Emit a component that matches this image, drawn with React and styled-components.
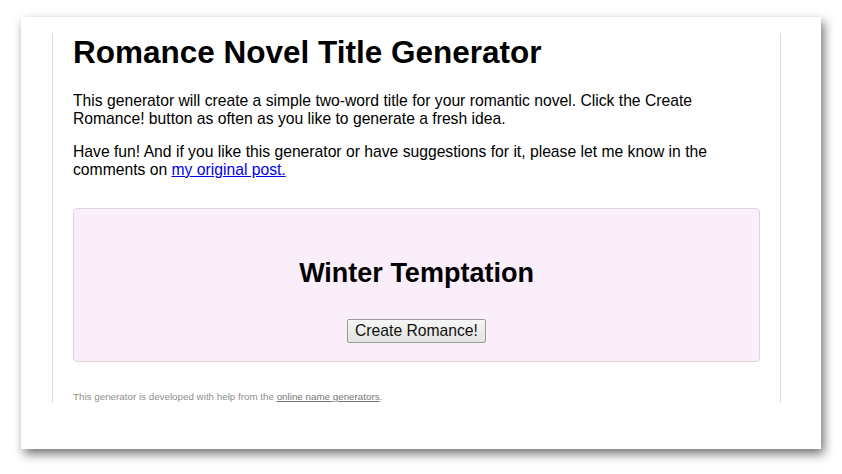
import React from 'react';
import styled, { createGlobalStyle } from 'styled-components';

const GlobalStyle = createGlobalStyle`
  html, body {
    margin: 0;
    padding: 0;
    background: #fff;
  }
  body {
    font-family: "Liberation Sans", Arial, sans-serif;
    color: #000;
  }
`;

const Page = styled.div`
  padding: 17px 21px 25px 21px;
`;

const Sheet = styled.div`
  width: 800px;
  height: 432px;
  box-sizing: border-box;
  padding: 16px 40px 0 31px;
  background: #fff;
  box-shadow: 3px 5px 10px rgba(0, 0, 0, 0.55);
`;

const Column = styled.div`
  border-left: 1px solid #dcdcdc;
  border-right: 1px solid #dcdcdc;
  padding: 1px 20px 0 20px;
`;

const Title = styled.h1`
  font-size: 31.5px;
  font-weight: bold;
  margin: 0 0 22px;
  line-height: 36px;
`;

const Intro = styled.p`
  font-size: 15.7px;
  line-height: 18px;
  margin: 0 0 15px;

  a {
    color: #0000ee;
  }
`;

const GeneratorBox = styled.div`
  margin-top: 29px;
  padding: 0 20px 18px;
  background: #fbeefb;
  border: 1px solid #dcd6dc;
  border-radius: 4px;
  text-align: center;
`;

const Result = styled.h2`
  font-size: 27px;
  font-weight: bold;
  line-height: 31px;
  margin: 0;
  padding: 49px 0 30px;
`;

const CreateButton = styled.button`
  font-family: "Liberation Sans", Arial, sans-serif;
  font-size: 15.7px;
  color: #111;
  height: 24px;
  padding: 0 7px;
  border: 1px solid #9a9a9a;
  border-radius: 2px;
  background: linear-gradient(#f6f6f6, #e2e2e2);
  cursor: pointer;
`;

const Credit = styled.p`
  font-size: 9.8px;
  color: #8f8f8f;
  margin: 29px 0 0;
  line-height: 12px;

  a {
    color: #777;
  }
`;

export default function App() {
  return (
    <Page>
      <GlobalStyle />
      <Sheet>
        <Column>
          <Title>Romance Novel Title Generator</Title>
          <Intro>
            This generator will create a simple two-word title for your romantic novel. Click the Create
            Romance! button as often as you like to generate a fresh idea.
          </Intro>
          <Intro>
            Have fun! And if you like this generator or have suggestions for it, please let me know in the
            comments on <a href="#post">my original post.</a>
          </Intro>
          <GeneratorBox>
            <Result>Winter Temptation</Result>
            <CreateButton>Create Romance!</CreateButton>
          </GeneratorBox>
          <Credit>
            This generator is developed with help from the <a href="#ong">online name generators</a>.
          </Credit>
        </Column>
      </Sheet>
    </Page>
  );
}
